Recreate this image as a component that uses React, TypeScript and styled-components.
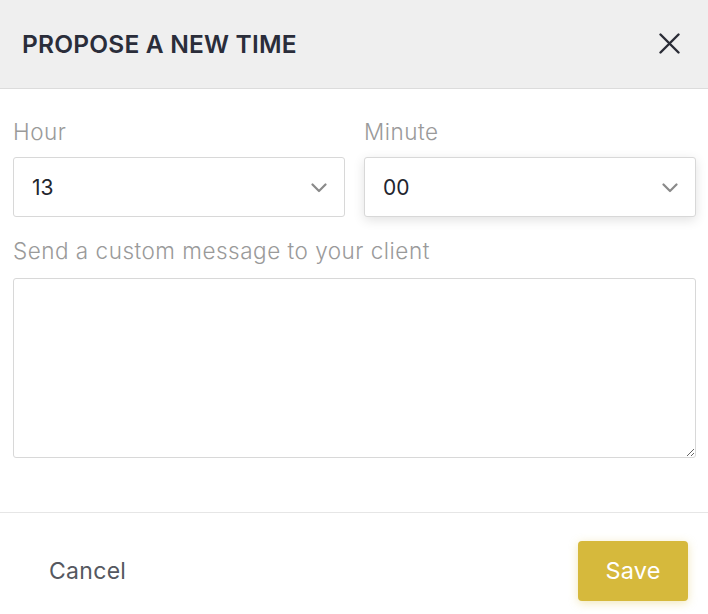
import { useState } from 'react';
import styled, { createGlobalStyle } from 'styled-components';

const GlobalStyle = createGlobalStyle`
  html, body {
    margin: 0;
    padding: 0;
    background: #fff;
  }
  body {
    font-family: Inter, "Noto Sans", "Liberation Sans", sans-serif;
  }
  * {
    box-sizing: border-box;
  }
`;

const Modal = styled.div`
  width: 708px;
  height: 614px;
  display: flex;
  flex-direction: column;
  background: #fff;
  overflow: hidden;
`;

const Header = styled.div`
  height: 89px;
  flex-shrink: 0;
  display: flex;
  align-items: center;
  justify-content: space-between;
  padding: 0 28px 1px 22px;
  background: #efefef;
  border-bottom: 1px solid #dcdcdc;
`;

const Title = styled.h2`
  margin: 0;
  font-size: 24.5px;
  font-weight: 600;
  color: #2a2d3a;
  letter-spacing: 0.2px;
`;

const CloseButton = styled.button`
  width: 22px;
  height: 22px;
  padding: 0;
  border: none;
  background: none;
  cursor: pointer;
  display: flex;
  align-items: center;
  justify-content: center;
`;

const Body = styled.div`
  padding: 30px 12px 54px 13px;
  display: flex;
  flex-direction: column;
  gap: 21px;
`;

const Row = styled.div`
  display: grid;
  grid-template-columns: 1fr 1fr;
  column-gap: 19px;
`;

const Field = styled.div`
  display: flex;
  flex-direction: column;
`;

const Label = styled.label<{ $gap?: number }>`
  font-size: 22.5px;
  line-height: 26px;
  font-weight: 300;
  letter-spacing: 0.5px;
  color: #9a9a9a;
  margin-bottom: ${(p) => p.$gap ?? 12}px;
`;

const SelectWrap = styled.div`
  position: relative;
`;

const Select = styled.select<{ $focused?: boolean }>`
  width: 100%;
  height: 60px;
  appearance: none;
  -webkit-appearance: none;
  padding: 0 50px 0 18px;
  font-family: inherit;
  font-size: 21px;
  color: #23252e;
  background: #fff;
  border: 1px solid #d8d8d8;
  border-radius: 3px;
  outline: none;
  box-shadow: ${(p) => (p.$focused ? '0 3px 12px rgba(0, 0, 0, 0.12)' : 'none')};
`;

const Chevron = styled.svg`
  position: absolute;
  right: 18px;
  top: 26px;
  pointer-events: none;
`;

const TextArea = styled.textarea`
  width: 100%;
  height: 180px;
  padding: 12px 16px;
  font-family: inherit;
  font-size: 18px;
  color: #23252e;
  border: 1px solid #d8d8d8;
  border-radius: 3px;
  outline: none;
  resize: both;
  display: block;
`;

const Footer = styled.div`
  flex: 1;
  display: flex;
  align-items: center;
  justify-content: space-between;
  padding: 14px 20px 0 13px;
  border-top: 1px solid #e6e6e6;
`;

const CancelButton = styled.button`
  border: none;
  background: none;
  padding: 0 36px;
  height: 60px;
  font-family: inherit;
  font-size: 23px;
  font-weight: 400;
  letter-spacing: 0.3px;
  color: #555860;
  cursor: pointer;
`;

const SaveButton = styled.button`
  width: 110px;
  height: 60px;
  border: none;
  border-radius: 4px;
  background: #d6b93c;
  color: #fff;
  font-family: inherit;
  font-size: 23.5px;
  font-weight: 400;
  letter-spacing: 0.2px;
  box-shadow: 0 2px 10px rgba(214, 185, 60, 0.35);
  cursor: pointer;
`;

const hours = Array.from({ length: 24 }, (_, i) => String(i).padStart(2, '0'));
const minutes = ['00', '15', '30', '45'];

function ChevronIcon() {
  return (
    <Chevron width="16" height="10" viewBox="0 0 16 10" fill="none">
      <path d="M1.5 1.5 8 8l6.5-6.5" stroke="#8a8a8a" strokeWidth="2.2" strokeLinecap="round" strokeLinejoin="round" />
    </Chevron>
  );
}

export default function App() {
  const [hour, setHour] = useState('13');
  const [minute, setMinute] = useState('00');
  const [message, setMessage] = useState('');

  return (
    <>
      <GlobalStyle />
      <Modal>
        <Header>
          <Title>PROPOSE A NEW TIME</Title>
          <CloseButton aria-label="Close">
            <svg width="21" height="21" viewBox="0 0 21 21" fill="none">
              <path d="M1.5 1.5l18 18M19.5 1.5l-18 18" stroke="#2a2c36" strokeWidth="2.4" strokeLinecap="round" />
            </svg>
          </CloseButton>
        </Header>
        <Body>
          <Row>
            <Field>
              <Label>Hour</Label>
              <SelectWrap>
                <Select value={hour} onChange={(e) => setHour(e.target.value)}>
                  {hours.map((h) => (
                    <option key={h} value={h}>{h}</option>
                  ))}
                </Select>
                <ChevronIcon />
              </SelectWrap>
            </Field>
            <Field>
              <Label>Minute</Label>
              <SelectWrap>
                <Select $focused value={minute} onChange={(e) => setMinute(e.target.value)}>
                  {minutes.map((m) => (
                    <option key={m} value={m}>{m}</option>
                  ))}
                </Select>
                <ChevronIcon />
              </SelectWrap>
            </Field>
          </Row>
          <Field>
            <Label $gap={14}>Send a custom message to your client</Label>
            <TextArea value={message} onChange={(e) => setMessage(e.target.value)} />
          </Field>
        </Body>
        <Footer>
          <CancelButton>Cancel</CancelButton>
          <SaveButton>Save</SaveButton>
        </Footer>
      </Modal>
    </>
  );
}
